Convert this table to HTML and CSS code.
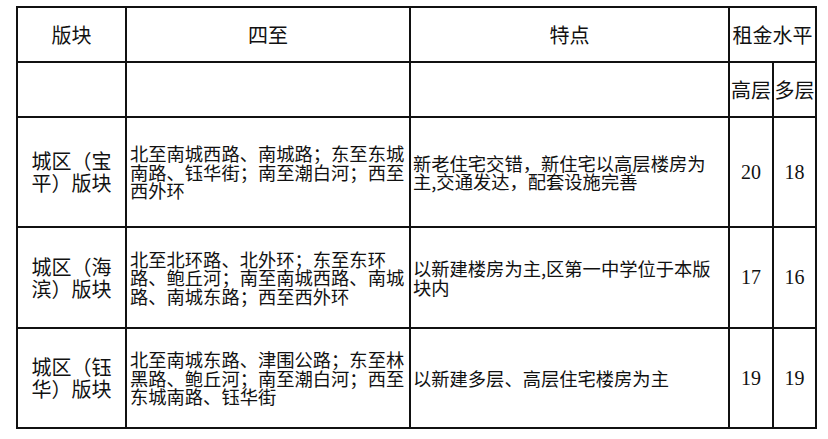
FILE: index.html
```html
<!DOCTYPE html>
<html lang="zh-CN">
<head>
<meta charset="utf-8">
<title>版块租金水平</title>
<link rel="stylesheet" href="styles.css">
</head>
<body>
<table class="rent">
  <colgroup>
    <col class="c-name">
    <col class="c-bound">
    <col class="c-feat">
    <col class="c-high">
    <col class="c-multi">
  </colgroup>
  <tr class="r-head">
    <td class="hd">版块</td>
    <td class="hd">四至</td>
    <td class="hd">特点</td>
    <td class="hd" colspan="2">租金水平</td>
  </tr>
  <tr class="r-sub">
    <td></td>
    <td></td>
    <td></td>
    <td class="hd">高层</td>
    <td class="hd">多层</td>
  </tr>
  <tr class="r-a">
    <td class="name">城区（宝平）版块</td>
    <td class="txt">北至南城西路、南城路；东至东城南路、钰华街；南至潮白河；西至西外环</td>
    <td class="txt feat">新老住宅交错，新住宅以高层楼房为主,交通发达，配套设施完善</td>
    <td class="num">20</td>
    <td class="num">18</td>
  </tr>
  <tr class="r-b">
    <td class="name">城区（海滨）版块</td>
    <td class="txt">北至北环路、北外环；东至东环路、鲍丘河；南至南城西路、南城路、南城东路；西至西外环</td>
    <td class="txt feat">以新建楼房为主,区第一中学位于本版块内</td>
    <td class="num">17</td>
    <td class="num">16</td>
  </tr>
  <tr class="r-c">
    <td class="name">城区（钰华）版块</td>
    <td class="txt">北至南城东路、津围公路；东至林黑路、鲍丘河；南至潮白河；西至东城南路、钰华街</td>
    <td class="txt feat">以新建多层、高层住宅楼房为主</td>
    <td class="num">19</td>
    <td class="num">19</td>
  </tr>
</table>
</body>
</html>
```

FILE: styles.css
```css
html, body {
  margin: 0;
  padding: 0;
  background: #ffffff;
}

body {
  font-family: "Noto Sans CJK SC", "Noto Sans", sans-serif;
  color: #111111;
}

.rent {
  margin: 6px 0 0 16px;
  width: 801px;
  table-layout: fixed;
  border-collapse: collapse;
}

.c-name { width: 109px; }
.c-bound { width: 284px; }
.c-feat { width: 319px; }
.c-high { width: 44px; }
.c-multi { width: 43px; }

.rent td {
  border: 2px solid #111111;
  padding: 0 3px;
  vertical-align: middle;
}

.r-head, .r-sub { height: 55px; }
.r-a { height: 110px; }
.r-b { height: 101px; }
.r-c { height: 100px; }

.rent td.hd {
  font-size: 20px;
  line-height: 22px;
  text-align: center;
  padding: 0;
  white-space: nowrap;
}

.rent td.name {
  font-size: 20px;
  line-height: 22px;
  text-align: center;
  padding: 0 10px;
}

.rent td.txt {
  font-size: 18.3px;
  line-height: 18.5px;
  text-align: left;
  padding: 0 1px 0 3px;
}

.rent td.feat {
  padding: 0 4px 0 2px;
}

.rent td.num {
  font-family: "Liberation Serif", "Times New Roman", serif;
  font-size: 20px;
  text-align: center;
  padding: 0;
}
```
